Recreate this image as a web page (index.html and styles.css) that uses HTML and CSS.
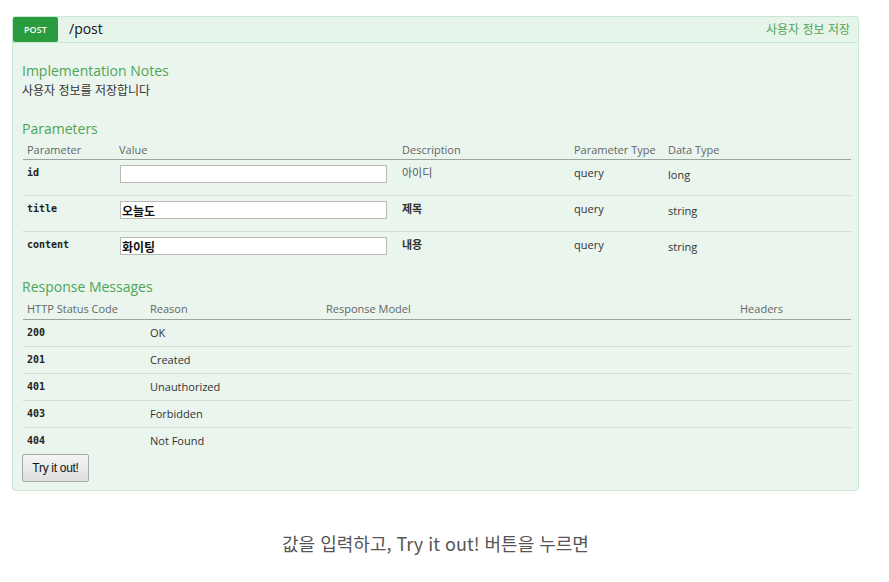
FILE: index.html
```html
<!DOCTYPE html>
<html lang="ko">
<head>
<meta charset="utf-8">
<title>POST /post</title>
<link rel="stylesheet" href="styles.css">
</head>
<body>
<div class="page">
  <div class="operation">
    <div class="heading">
      <span class="method">POST</span>
      <span class="path">/post</span>
      <span class="summary">사용자 정보 저장</span>
    </div>
    <div class="content">
      <h4 class="notes-title">Implementation Notes</h4>
      <p class="notes">사용자 정보를 저장합니다</p>

      <h4 class="section-title">Parameters</h4>
      <table class="params">
        <colgroup>
          <col class="c-param"><col class="c-value"><col class="c-desc"><col class="c-ptype"><col class="c-dtype">
        </colgroup>
        <thead>
          <tr><th>Parameter</th><th>Value</th><th>Description</th><th>Parameter Type</th><th>Data Type</th></tr>
        </thead>
        <tbody>
          <tr>
            <td class="code">id</td>
            <td><input class="field" type="text" value=""></td>
            <td class="desc light">아이디</td>
            <td>query</td>
            <td class="dtype">long</td>
          </tr>
          <tr>
            <td class="code">title</td>
            <td><input class="field filled" type="text" value="오늘도"></td>
            <td class="desc strong">제목</td>
            <td>query</td>
            <td class="dtype">string</td>
          </tr>
          <tr>
            <td class="code">content</td>
            <td><input class="field filled" type="text" value="화이팅"></td>
            <td class="desc strong">내용</td>
            <td>query</td>
            <td class="dtype">string</td>
          </tr>
        </tbody>
      </table>

      <h4 class="section-title resp-title">Response Messages</h4>
      <table class="responses">
        <colgroup>
          <col class="r-code"><col class="r-reason"><col class="r-model"><col class="r-headers">
        </colgroup>
        <thead>
          <tr><th>HTTP Status Code</th><th>Reason</th><th>Response Model</th><th>Headers</th></tr>
        </thead>
        <tbody>
          <tr><td class="code">200</td><td>OK</td><td></td><td></td></tr>
          <tr><td class="code">201</td><td>Created</td><td></td><td></td></tr>
          <tr><td class="code">401</td><td>Unauthorized</td><td></td><td></td></tr>
          <tr><td class="code">403</td><td>Forbidden</td><td></td><td></td></tr>
          <tr class="last"><td class="code">404</td><td>Not Found</td><td></td><td></td></tr>
        </tbody>
      </table>
      <button class="try" type="button">Try it out!</button>
    </div>
  </div>
  <p class="caption">값을 입력하고, Try it out! 버튼을 누르면</p>
</div>
</body>
</html>
```

FILE: styles.css
```css
* { box-sizing: border-box; }

html, body {
  margin: 0;
  padding: 0;
  background: #ffffff;
}

body {
  font-family: "Open Sans", "Noto Sans CJK KR", sans-serif;
  color: #333333;
}

.page {
  padding: 16px 30px 0 12px;
}

.operation {
  width: 847px;
}

.heading {
  display: flex;
  align-items: center;
  height: 27px;
  background: #e6f4ea;
  border: 1px solid #c8e8d4;
  border-radius: 3px 3px 0 0;
}

.method {
  display: flex;
  align-items: center;
  justify-content: center;
  width: 45px;
  height: 25px;
  background: #2a9b3e;
  color: #ffffff;
  font-size: 9px;
  font-weight: 600;
  border-radius: 2px;
  letter-spacing: 0.1px;
}

.path {
  margin-left: 11px;
  margin-top: -2px;
  font-size: 14px;
  color: #111111;
  flex: 1;
}

.summary {
  margin-right: 8px;
  margin-top: -2px;
  font-size: 12px;
  color: #4fa457;
  font-family: "Noto Sans CJK KR", sans-serif;
}

.content {
  background: #eaf5ee;
  border: 1px solid #c8e8d4;
  border-top: none;
  border-radius: 0 0 4px 4px;
  padding: 19px 8px 8px 9px;
}

h4 {
  margin: 0;
  font-weight: normal;
  font-size: 14px;
  color: #4fa457;
  line-height: 18px;
}

.notes {
  margin: 1px 0 0 0;
  font-size: 12px;
  line-height: 18px;
  color: #333333;
  font-family: "Noto Sans CJK KR", sans-serif;
}

.section-title {
  margin-top: 21px;
}

.resp-title {
  margin-top: 10px;
}

table {
  width: 828px;
  border-collapse: collapse;
  table-layout: fixed;
  margin-left: 1px;
}

.params {
  margin-top: 2px;
}

.responses {
  margin-top: 3px;
}

th {
  text-align: left;
  font-weight: normal;
  font-size: 11px;
  color: #666666;
  padding: 2px 4px 2px 4px;
  line-height: 15px;
  border-bottom: 1px solid #9aa39c;
}

.responses th {
  padding-bottom: 3px;
}

td {
  font-size: 11px;
  color: #333333;
  vertical-align: top;
  padding: 0 4px;
}

.params tbody tr {
  height: 36px;
  border-bottom: 1px solid #cfdcd3;
}

.params tbody tr:last-child {
  border-bottom: none;
}

.params td {
  padding-top: 5px;
  line-height: 15px;
}

.c-param { width: 92px; }
.c-value { width: 283px; }
.c-desc { width: 172px; }
.c-ptype { width: 94px; }
.c-dtype { width: 187px; }

.r-code { width: 123px; }
.r-reason { width: 176px; }
.r-model { width: 414px; }
.r-headers { width: 115px; }

.code {
  font-family: "DejaVu Sans Mono", monospace;
  font-weight: bold;
  font-size: 10px;
  color: #222222;
}

.field {
  display: block;
  width: 267px;
  height: 18px;
  margin: 0 0 0 1px;
  border: 1px solid #b9b9b9;
  background: #ffffff;
  padding: 0 1px;
  font-family: "Noto Sans CJK KR", sans-serif;
  font-size: 12px;
  font-weight: bold;
  color: #111111;
  line-height: 16px;
}

.desc {
  font-family: "Noto Sans CJK KR", sans-serif;
  font-size: 11px;
}

.desc.light { color: #555555; }
.desc.strong { font-weight: bold; color: #333333; }

.dtype {
  padding-top: 7px !important;
}

.responses tbody tr {
  height: 27px;
  border-bottom: 1px solid #cfdcd3;
}

.responses tbody tr.last {
  border-bottom: none;
}

.responses td {
  vertical-align: middle;
  line-height: 15px;
}

.try {
  display: block;
  margin-top: 0;
  width: 67px;
  height: 28px;
  border: 1px solid #a9a9a9;
  border-radius: 2px;
  background: linear-gradient(#f5f5f5, #dedede);
  font-family: "Liberation Sans", Arial, sans-serif;
  font-size: 12px;
  color: #111111;
  padding: 0;
  letter-spacing: -0.3px;
}

.caption {
  width: 847px;
  margin: 39px 0 0 0;
  text-align: center;
  font-family: "Noto Sans CJK KR", sans-serif;
  font-size: 18px;
  color: #555555;
  line-height: 26px;
}
```
